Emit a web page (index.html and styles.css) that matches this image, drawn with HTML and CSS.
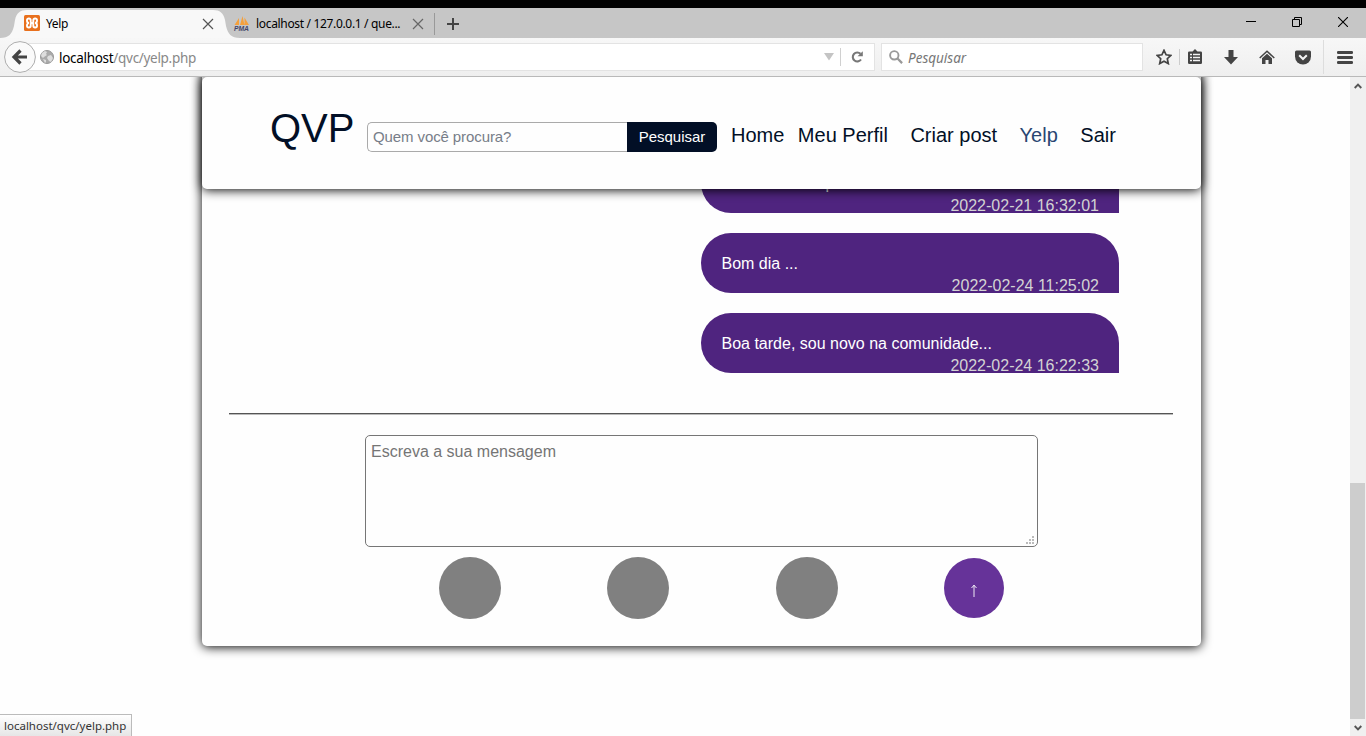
FILE: index.html
```html
<!DOCTYPE html>
<html lang="pt">
<head>
<meta charset="utf-8">
<title>Yelp</title>
<link rel="stylesheet" href="styles.css">
</head>
<body>
<div class="tabbar">
  <div class="tab active">
    <svg class="tab-shape" width="240" height="30" viewBox="0 0 240 30"><path d="M0 30C9 30 12 26 14 18L15 12C16.500 5 20 2 27 2H213C220 2 223.500 5 225 12L226 18C228 26 231 30 240 30Z" fill="#f8f8f8"/></svg>
    <svg class="favicon" width="16" height="16" viewBox="0 0 16 16"><rect width="16" height="16" rx="1.500" fill="#e8701d"/><path d="M5 3.500h-.3a1.700 1.700 0 0 0-1.700 1.700v.6A2.200 2.200 0 0 0 5.200 8 2.200 2.200 0 0 0 3 10.200v.6a1.700 1.700 0 0 0 1.700 1.700h.3a1.700 1.700 0 0 0 1.700-1.700V9.500q0-1.500 1.300-1.500t1.300 1.500v1.300a1.700 1.700 0 0 0 1.700 1.700h.3a1.700 1.700 0 0 0 1.700-1.700v-.6A2.200 2.200 0 0 0 10.800 8 2.200 2.200 0 0 0 13 5.800v-.6a1.700 1.700 0 0 0-1.700-1.700H11a1.700 1.700 0 0 0-1.700 1.700v1.300Q9.300 8 8 8T6.700 6.500V5.200A1.700 1.700 0 0 0 5 3.500z" fill="none" stroke="#fff" stroke-width="1.900"/></svg>
    <span class="tab-title first">Yelp</span>
    <svg class="close" width="12" height="12" viewBox="0 0 12 12"><path d="M1 1l10 10M11 1L1 11" stroke="#555" stroke-width="1.200"/></svg>
  </div>
  <div class="tab second">
    <svg class="favicon" width="17" height="16" viewBox="0 0 17 16"><path d="M1.500 10L6 3v7zM7 10l2.500-9 2 9zM11.500 10V2.500l4.500 7.500z" fill="#f5a03c"/><text x="1" y="15.500" class="pma" textLength="15" lengthAdjust="spacingAndGlyphs">PMA</text></svg>
    <span class="tab-title">localhost / 127.0.0.1 / que...</span>
    <svg class="close" width="12" height="12" viewBox="0 0 12 12"><path d="M1 1l10 10M11 1L1 11" stroke="#666" stroke-width="1.200"/></svg>
  </div>
  <svg class="newtab" width="12" height="12" viewBox="0 0 12 12"><path d="M6 0v12M0 6h12" stroke="#444" stroke-width="2"/></svg>
  <div class="window-buttons">
    <svg width="10" height="10" viewBox="0 0 10 10"><path d="M0 4.500h10" stroke="#000"/></svg>
    <svg width="10" height="10" viewBox="0 0 10 10"><path d="M.5 2.500h7v7h-7zM2.500 2.500v-2h7v7h-2" fill="none" stroke="#000"/></svg>
    <svg width="10" height="10" viewBox="0 0 10 10"><path d="M0 0l10 10M10 0L0 10" stroke="#000" stroke-width="1.100"/></svg>
  </div>
</div>
<div class="toolbar">
  <svg class="back" width="32" height="32" viewBox="0 0 32 32"><circle cx="16" cy="16" r="15.400" fill="#fafafa" stroke="#adadad"/><path d="M10.500 16H23M16.500 9.500L10 16l6.500 6.500" fill="none" stroke="#444" stroke-width="3.200"/></svg>
  <div class="urlbar">
    <svg class="globe" width="14" height="14" viewBox="0 0 14 14"><circle cx="7" cy="7" r="6.500" fill="#aaa" stroke="#999"/><path d="M2 3l3-2 2 1-1 2 1 1-3 2-1 1-2-2zM8 6l3-1 2 3-2 4-2-1-2-3zM3 9l3 1v2l-1 1z" fill="#ddd"/></svg>
    <span class="url">localhost<span>/qvc/yelp.php</span></span>
    <svg class="drop" width="10" height="8" viewBox="0 0 10 8"><path d="M0 0h10L5 7.500z" fill="#c4c4c4"/></svg>
    <span class="bar-line"></span>
    <svg class="reload" width="12" height="12" viewBox="0 0 12 12"><path d="M9.500 2.800A4.500 4.500 0 1 0 10 8.500" fill="none" stroke="#777" stroke-width="2.100"/><path d="M11.800.3v5H6.500z" fill="#777"/></svg>
  </div>
  <div class="searchbar">
    <svg width="14" height="14" viewBox="0 0 14 14"><circle cx="5.300" cy="5.300" r="4.200" fill="none" stroke="#999" stroke-width="1.900"/><path d="M8.500 8.500l4.600 4.600" stroke="#999" stroke-width="2.300"/></svg>
    <span>Pesquisar</span>
  </div>
  <div class="actions">
    <svg width="16" height="16" viewBox="0 0 16 16"><path d="M8 1.300l2.100 4.500 4.700.6-3.500 3.300 1 4.900L8 12.200l-4.300 2.400 1-4.900L1.200 6.400l4.700-.6z" fill="none" stroke="#444" stroke-width="1.700"/></svg>
    <i class="sep"></i>
    <svg width="14" height="16" viewBox="0 0 14 16"><path d="M1.200 2.500H4.500L7 0l2.500 2.500h3.300Q14 2.500 14 3.700v10.100q0 1.200-1.200 1.200H1.200Q0 15 0 13.800V3.700Q0 2.500 1.200 2.500z" fill="#444"/><path d="M2 5.500h2M2 8.500h2M2 11.500h2M5 5.500h7M5 8.500h7M5 11.500h7" stroke="#f4f4f4" stroke-width="1.400"/></svg>
    <svg class="download" width="14" height="15" viewBox="0 0 14 15"><path d="M4.500 0h5v7H14l-7 7.500L0 7h4.500z" fill="#444"/></svg>
    <svg class="home" width="16" height="15" viewBox="0 0 16 15"><path d="M.7 8L8 1.300 15.300 8" fill="none" stroke="#444" stroke-width="1.500"/><path d="M3 8.300l5-4.600 5 4.600V14H9.500v-4h-3v4H3z" fill="#444"/></svg>
    <svg class="pocket" width="16" height="15" viewBox="0 0 16 15"><path d="M1.500.5h13Q16 .5 16 2v4.500a8 8 0 0 1-16 0V2Q0 .5 1.500.500z" fill="#444"/><path d="M4.200 5.200L8 9l3.800-3.800" fill="none" stroke="#f4f4f4" stroke-width="2"/></svg>
    <i class="sep tall"></i>
    <svg class="menu" width="16" height="13" viewBox="0 0 16 13"><path d="M1.200 1.500h13.600M1.200 6.500h13.600M1.200 11.500h13.600" stroke="#444" stroke-width="2.800" stroke-linecap="round"/></svg>
  </div>
</div>
<div class="viewport">
  <div class="page">
    <main class="card">
      <header class="header">
        <h1 class="logo">QVP</h1>
        <div class="search"><div class="search-input">Quem você procura?</div><div class="search-button">Pesquisar</div></div>
        <nav class="nav"><a>Home</a><a>Meu Perfil</a><a>Criar post</a><a class="current">Yelp</a><a>Sair</a></nav>
      </header>
      <section class="messages">
        <div class="message"><p class="offset">p</p><time>2022-02-21 16:32:01</time></div>
        <div class="message"><p>Bom dia ...</p><time>2022-02-24 11:25:02</time></div>
        <div class="message"><p>Boa tarde, sou novo na comunidade...</p><time>2022-02-24 16:22:33</time></div>
      </section>
      <div class="rule"></div>
      <div class="compose">Escreva a sua mensagem
        <svg class="grip" width="8" height="8" viewBox="0 0 8 8"><path d="M6 0h2v2H6zM3 3h2v2H3zM6 3h2v2H6zM0 6h2v2H0zM3 6h2v2H3zM6 6h2v2H6z" fill="#bbb"/></svg>
      </div>
      <div class="buttons">
        <span class="dot"></span><span class="dot"></span><span class="dot"></span>
        <span class="send"><svg width="6" height="13" viewBox="0 0 6 13"><path d="M3 1V13M.5 4L3 1.200l2.500 2.800" fill="none" stroke="#fff" stroke-width=".9"/></svg></span>
      </div>
    </main>
  </div>
  <div class="scrollbar">
    <svg width="8" height="6" viewBox="0 0 8 6"><path d="M.7 5L4 1.700 7.300 5" fill="none" stroke="#555" stroke-width="1.900"/></svg>
    <div class="thumb"></div>
    <svg width="8" height="6" viewBox="0 0 8 6"><path d="M.7 1L4 4.300 7.300 1" fill="none" stroke="#555" stroke-width="1.900"/></svg>
  </div>
</div>
<div class="status">localhost/qvc/yelp.php</div>
</body>
</html>
```
FILE: styles.css
```css
* { box-sizing: border-box; }
body {
  margin: 0;
  height: 736px;
  display: flex;
  flex-direction: column;
  overflow: hidden;
  border-top: 8px solid #000;
  background: #fefefe;
  font-family: "Liberation Sans", Arial, sans-serif;
}
svg { display: block; flex: none; }

/* Browser chrome */
.tabbar, .toolbar, .status { font-family: "Noto Sans", sans-serif; }
.tabbar {
  height: 30px;
  flex: none;
  display: flex;
  align-items: center;
  background: #c6c6c6;
}
.tab {
  position: relative;
  height: 30px;
  display: flex;
  align-items: center;
  font-size: 12px;
  white-space: nowrap;
  color: #000;
}
.tab > * { position: relative; }
.tab .tab-shape { position: absolute; left: 0; top: 0; }
.tab.active { width: 233px; padding-left: 24px; }
.tab.second { width: 202px; }
.tab.second::after {
  content: "";
  position: absolute;
  right: 0;
  top: 5px;
  width: 1px;
  height: 22px;
  background: #999;
}
.tab-title { width: 146px; margin-left: 6px; letter-spacing: -0.33px; }
.tab-title.first { width: 156px; }
.tab.second .close { margin-left: 10px; }
.tab-title + .close { top: 1px; }
.pma { font: italic bold 7px "Liberation Sans", sans-serif; fill: #446; }
.newtab { margin: 2px 0 0 12px; }
.window-buttons { display: flex; gap: 36px; margin: 0 18px 2px auto; }

.toolbar {
  height: 39px;
  flex: none;
  display: flex;
  align-items: center;
  padding-left: 4px;
  background: linear-gradient(#f7f7f7, #efefef);
  border-bottom: 1px solid #b9b9b9;
}
.back { z-index: 1; }
.urlbar, .searchbar {
  height: 28px;
  display: flex;
  align-items: center;
  background: #fff;
  border: 1px solid #e3e3e3;
  font-size: 14px;
}
.urlbar { width: 857px; margin-left: -18px; padding-left: 21px; }
.url { margin: 1px auto 0 5px; font-size: 13.500px; letter-spacing: -0.3px; color: #000; }
.url span { color: #888; }
.bar-line { width: 1px; height: 18px; margin-left: 6px; background: #d0d0d0; }
.reload { margin: 0 11px 0 10px; }
.searchbar { width: 262px; margin-left: 6px; padding-left: 7px; }
.searchbar span { margin: 1px 0 0 5px; font-size: 13.500px; font-style: italic; color: #777; }
.actions { display: flex; align-items: center; margin-left: 13px; height: 38px; }
.sep { width: 1px; height: 16px; margin: 0 8px 0 7px; background: #ccc; }
.download { margin-left: 22px; }
.home { margin-left: 21px; }
.pocket { margin-left: 20px; }
.sep.tall { height: 34px; margin: 0 13px 0 12px; background: #ddd; }

/* Page content */
.viewport { flex: 1; min-height: 0; display: flex; overflow: hidden; }
.page { flex: 1; padding-left: 202px; }
.card {
  width: 999px;
  height: 589px;
  margin-top: -20px;
  padding-top: 20px;
  background: #fefefe;
  border-radius: 5px;
  box-shadow: 0 1px 11px #000;
}
.header {
  position: relative;
  z-index: 1;
  display: flex;
  height: 112px;
  padding: 0 0 0 67px;
  background: #fefefe;
  border-radius: 5px;
  box-shadow: 0 1px 11px #000;
}
.logo { margin: 28px 0 0; padding-left: 1px; width: 98px; font-size: 40px; line-height: 46px; font-weight: 400; color: #020f26; }
.search { display: flex; margin-top: 45px; height: 30px; font-size: 15px; line-height: 28px; white-space: nowrap; }
.search-input { width: 260px; padding-left: 5px; border: 1px solid #aaa; border-right: 0; border-radius: 5px 0 0 5px; color: #777d88; letter-spacing: -0.1px; }
.search-button { width: 90px; text-align: center; line-height: 30px; background: #020f26; color: #fff; border-radius: 0 5px 5px 0; }
.nav { display: flex; margin: 46px 0 0 12px; font-size: 20px; line-height: 24px; color: #020f26; white-space: nowrap; }
.nav a { margin-left: 22.500px; }
.nav a:first-child { margin-left: 2px; }
.nav a:nth-child(2) { margin-left: 13.500px; }
.nav .current { color: #294672; }
.messages { display: flex; flex-direction: column; gap: 20px; margin: -36px 82px 0 499px; }
.message {
  height: 60px;
  padding: 20px 20px 0;
  border-radius: 30px 30px 0 30px;
  background: #4f247f;
  color: #fff;
  font-size: 16px;
  line-height: 22px;
}
.message p { margin: 0; padding-left: 0.5px; }
.message .offset { padding-left: 104.500px; }
.message time { display: block; text-align: right; color: #d3d3d3; }
.rule { height: 2px; margin: 40px 28px 0 27px; background: #bbb; border-top: 1px solid #555; }
.compose {
  position: relative;
  width: 673px;
  height: 112px;
  margin: 20px 0 0 163px;
  padding: 6px 5px;
  border: 1px solid #767676;
  border-radius: 5px;
  font-size: 16px;
  line-height: 19px;
  color: #757575;
}
.grip { position: absolute; right: 3px; bottom: 2px; }
.buttons { width: 673px; margin: 10px 0 0 184px; display: grid; grid-template-columns: repeat(4, 1fr); place-items: center; }
.dot { width: 62px; height: 62px; border-radius: 50%; background: #808080; }
.send { width: 60px; height: 60px; margin-right: 2px; padding-top: 4px; border-radius: 50%; background: #639; display: grid; place-items: center; }
.scrollbar { width: 16px; display: flex; flex-direction: column; align-items: center; padding: 6px 1px 5px 0; background: #f0f0f0; }
.thumb { width: 15px; height: 236px; margin: auto 0 6px; background: #cdcdcd; }
.status {
  position: absolute;
  left: 0;
  bottom: 0;
  width: 132px;
  height: 22px;
  padding-left: 4px;
  border: 1px solid #bbb;
  border-width: 1px 1px 0 0;
  background: linear-gradient(#fff, #e6e6e6);
  font-size: 11.500px;
  line-height: 22px;
  color: #333;
  white-space: nowrap;
}
```
